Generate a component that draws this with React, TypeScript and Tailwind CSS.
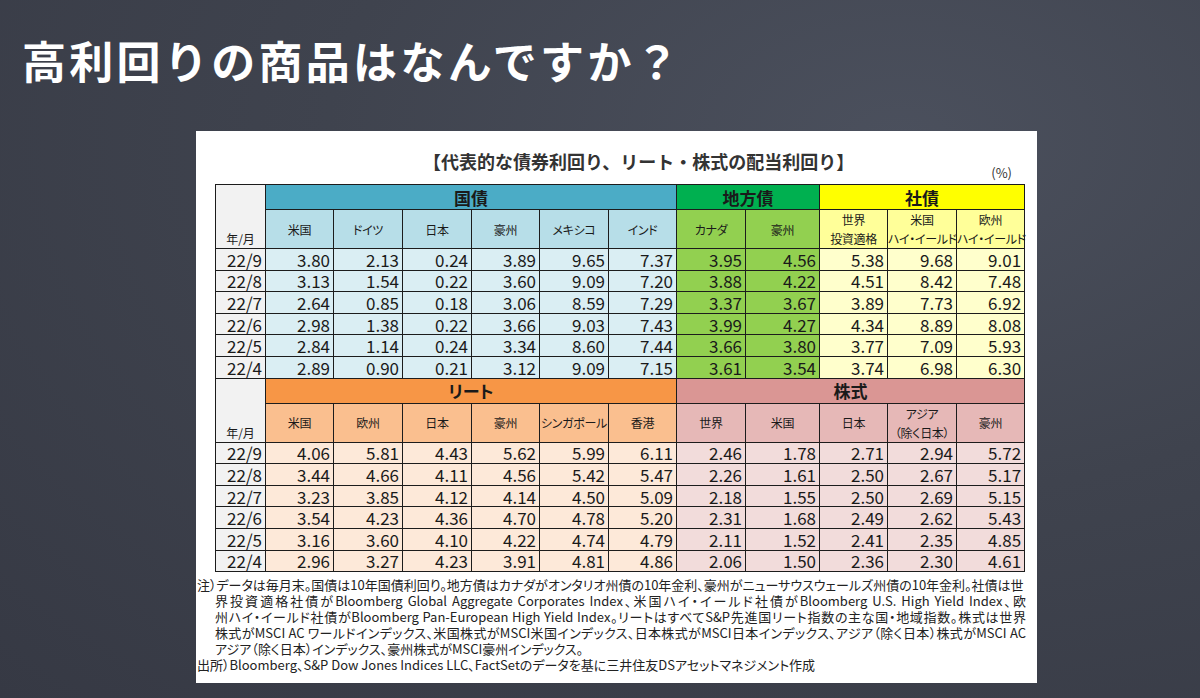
type Group = {
  title: string
  head: string
  sub: string
  cell: string
  cols: string[][]
}

const widths = [50, 68, 69, 69, 68, 69, 68, 69, 74, 68, 69, 68]

const dates = ["22/9", "22/8", "22/7", "22/6", "22/5", "22/4"]

const topGroups: Group[] = [
  {
    title: "国債",
    head: "bg-[#4bacc6]",
    sub: "bg-[#b7dee8]",
    cell: "bg-[#daeef3]",
    cols: [["米国"], ["ドイツ"], ["日本"], ["豪州"], ["メキシコ"], ["インド"]],
  },
  {
    title: "地方債",
    head: "bg-[#00b050]",
    sub: "bg-[#92d050]",
    cell: "bg-[#92d050]",
    cols: [["カナダ"], ["豪州"]],
  },
  {
    title: "社債",
    head: "bg-[#ffff00]",
    sub: "bg-[#ffff99]",
    cell: "bg-[#ffffcc]",
    cols: [
      ["世界", "投資適格"],
      ["米国", "ハイ・イールド"],
      ["欧州", "ハイ・イールド"],
    ],
  },
]

const bottomGroups: Group[] = [
  {
    title: "リート",
    head: "bg-[#f79646]",
    sub: "bg-[#fabf8f]",
    cell: "bg-[#fde9d9]",
    cols: [["米国"], ["欧州"], ["日本"], ["豪州"], ["シンガポール"], ["香港"]],
  },
  {
    title: "株式",
    head: "bg-[#da9694]",
    sub: "bg-[#e6b8b7]",
    cell: "bg-[#f2dcdb]",
    cols: [["世界"], ["米国"], ["日本"], ["アジア", "（除く日本）"], ["豪州"]],
  },
]

const topRows = [
  ["3.80", "2.13", "0.24", "3.89", "9.65", "7.37", "3.95", "4.56", "5.38", "9.68", "9.01"],
  ["3.13", "1.54", "0.22", "3.60", "9.09", "7.20", "3.88", "4.22", "4.51", "8.42", "7.48"],
  ["2.64", "0.85", "0.18", "3.06", "8.59", "7.29", "3.37", "3.67", "3.89", "7.73", "6.92"],
  ["2.98", "1.38", "0.22", "3.66", "9.03", "7.43", "3.99", "4.27", "4.34", "8.89", "8.08"],
  ["2.84", "1.14", "0.24", "3.34", "8.60", "7.44", "3.66", "3.80", "3.77", "7.09", "5.93"],
  ["2.89", "0.90", "0.21", "3.12", "9.09", "7.15", "3.61", "3.54", "3.74", "6.98", "6.30"],
]

const bottomRows = [
  ["4.06", "5.81", "4.43", "5.62", "5.99", "6.11", "2.46", "1.78", "2.71", "2.94", "5.72"],
  ["3.44", "4.66", "4.11", "4.56", "5.42", "5.47", "2.26", "1.61", "2.50", "2.67", "5.17"],
  ["3.23", "3.85", "4.12", "4.14", "4.50", "5.09", "2.18", "1.55", "2.50", "2.69", "5.15"],
  ["3.54", "4.23", "4.36", "4.70", "4.78", "5.20", "2.31", "1.68", "2.49", "2.62", "5.43"],
  ["3.16", "3.60", "4.10", "4.22", "4.74", "4.79", "2.11", "1.52", "2.41", "2.35", "4.85"],
  ["2.96", "3.27", "4.23", "3.91", "4.81", "4.86", "2.06", "1.50", "2.36", "2.30", "4.61"],
]

const line = "border border-[#1c1c1c]"

function Section({ groups, rows }: { groups: Group[]; rows: string[][] }) {
  // which bg each data column gets
  const cellBgs = groups.flatMap((g) => g.cols.map(() => g.cell))

  return (
    <>
      <tr className="h-[25px]">
        <td
          rowSpan={2}
          className={`${line} bg-[#f2f2f2] text-center align-bottom pb-[1px] text-[12px] leading-[16px]`}
        >
          年/月
        </td>
        {groups.map((g) => (
          <td
            key={g.title}
            colSpan={g.cols.length}
            className={`${line} ${g.head} text-center text-[17px] font-bold leading-none`}
          >
            {g.title}
          </td>
        ))}
      </tr>
      <tr className="h-[37px]">
        {groups.flatMap((g) =>
          g.cols.map((c, i) => (
            <td
              key={g.title + i}
              className={`${line} ${g.sub} text-center text-[12px] leading-[19px] whitespace-nowrap tracking-[-0.3px]`}
            >
              {c.map((t) => (
                <div key={t}>{t}</div>
              ))}
            </td>
          ))
        )}
      </tr>
      {rows.map((r, ri) => (
        <tr key={ri} className="h-[21.6px]">
          <td className={`${line} bg-[#f2f2f2] text-right pr-[3px] text-[17px] leading-none`}>
            {dates[ri]}
          </td>
          {r.map((v, ci) => (
            <td
              key={ci}
              className={`${line} ${cellBgs[ci]} text-right pr-[3px] text-[17px] leading-none`}
            >
              {v}
            </td>
          ))}
        </tr>
      ))}
    </>
  )
}

export default function App() {
  return (
    <div className="h-[698px] w-full overflow-hidden bg-[#3e424d] bg-[radial-gradient(ellipse_at_75%_20%,#4b505d_0%,#3f434e_45%,#363944_100%)] font-['Noto_Sans_CJK_JP',sans-serif]">
      {/* Title */}
      <div className="pl-[22px] pt-[33px] h-[131px]">
        <h1 className="text-[44px] font-bold leading-[54px] tracking-[3.3px] text-white">
          高利回りの商品はなんですか？
        </h1>
      </div>

      {/* Chart panel */}
      <div className="ml-[196px] h-[552px] w-[841px] bg-white pt-[18px] text-[#1a1a1a]">
        <div className="ml-[19px] flex h-[35px] w-[809px]">
          <div className="pl-[208px] text-[18px] font-bold leading-[24px] text-[#333]">
            【代表的な債券利回り、リート・株式の配当利回り】
          </div>
          <div className="ml-auto self-end pr-[12px] text-[13px] leading-[22px] text-[#333]">
            (%)
          </div>
        </div>

        <table className="ml-[19px] table-fixed border-collapse w-[809px] [font-feature-settings:'palt']">
          <colgroup>
            {widths.map((w, i) => (
              <col key={i} style={{ width: w }} />
            ))}
          </colgroup>
          <tbody>
            <Section groups={topGroups} rows={topRows} />
            <Section groups={bottomGroups} rows={bottomRows} />
          </tbody>
        </table>

        {/* Notes */}
        <div className="mt-[5px] ml-[1px] w-[829px] text-[13px] leading-[16px] text-[#222] whitespace-nowrap [font-feature-settings:'palt']">
          <div className="text-justify [text-align-last:justify] pr-[4px]">
            注）データは毎月末。国債は10年国債利回り。地方債はカナダがオンタリオ州債の10年金利、豪州がニューサウスウェールズ州債の10年金利。社債は世
          </div>
          <div className="pl-[18px]">
            <div className="text-justify [text-align-last:justify]">
              界投資適格社債がBloomberg Global Aggregate Corporates Index、米国ハイ・イールド社債がBloomberg U.S. High Yield Index、欧
            </div>
            <div className="text-justify [text-align-last:justify]">
              州ハイ・イールド社債がBloomberg Pan-European High Yield Index。リートはすべてS&P先進国リート指数の主な国・地域指数。株式は世界
            </div>
            <div className="text-justify [text-align-last:justify]">
              株式がMSCI AC ワールドインデックス、米国株式がMSCI米国インデックス、日本株式がMSCI日本インデックス、アジア（除く日本）株式がMSCI AC
            </div>
            <div>アジア（除く日本）インデックス、豪州株式がMSCI豪州インデックス。</div>
          </div>
          <div>
            出所）Bloomberg、S&P Dow Jones Indices LLC、FactSetのデータを基に三井住友DSアセットマネジメント作成
          </div>
        </div>
      </div>
    </div>
  )
}
